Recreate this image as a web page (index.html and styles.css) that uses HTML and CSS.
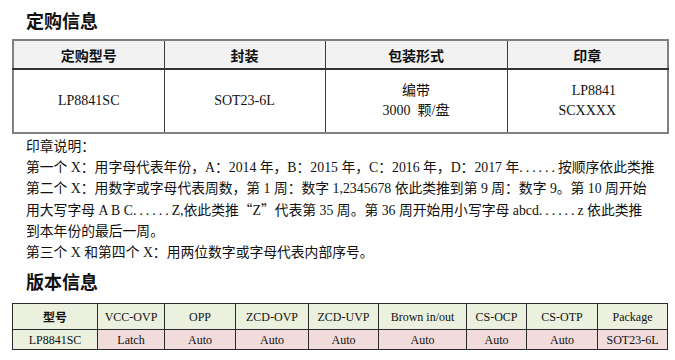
FILE: index.html
```html
<!DOCTYPE html>
<html lang="zh-CN">
<head>
<meta charset="utf-8">
<title>定购信息</title>
<link rel="stylesheet" href="styles.css">
</head>
<body>
<h2 class="title">定购信息</h2>
<table class="order">
  <colgroup>
    <col class="c1"><col class="c2"><col class="c3"><col class="c4">
  </colgroup>
  <thead>
    <tr class="head">
      <th>定购型号</th><th>封装</th><th>包装形式</th><th>印章</th>
    </tr>
  </thead>
  <tbody>
    <tr class="data">
      <td>LP8841SC</td>
      <td>SOT23-6L</td>
      <td>编带<br>3000&nbsp; 颗/盘</td>
      <td><span class="mark">LP8841<br>SCXXXX</span></td>
    </tr>
  </tbody>
</table>
<div class="notes">
  <p>印章说明：</p>
  <p>第一个 X：用字母代表年份，A：2014 年，B：2015 年，C：2016 年，D：2017 年<span class="dots">......</span>按顺序依此类推</p>
  <p>第二个 X：用数字或字母代表周数，第 1 周：数字 1,2345678 依此类推到第 9 周：数字 9。第 10 周开始<br>用大写字母 A B C<span class="dots">......</span>Z,依此类推<span class="q">“</span>Z<span class="q">”</span>代表第 35 周。第 36 周开始用小写字母 abcd<span class="dots">......</span>z 依此类推<br>到本年份的最后一周。</p>
  <p>第三个 X 和第四个 X：用两位数字或字母代表内部序号。</p>
</div>
<h2 class="title title2">版本信息</h2>
<table class="version">
  <colgroup>
    <col class="v1"><col class="v2"><col class="v3"><col class="v4"><col class="v5"><col class="v6"><col class="v7"><col class="v8"><col class="v9">
  </colgroup>
  <tr class="vhead">
    <th class="cjk">型号</th><th>VCC-OVP</th><th>OPP</th><th>ZCD-OVP</th><th>ZCD-UVP</th><th>Brown in/out</th><th>CS-OCP</th><th>CS-OTP</th><th>Package</th>
  </tr>
  <tr class="vdata">
    <td class="model">LP8841SC</td><td>Latch</td><td>Auto</td><td>Auto</td><td>Auto</td><td>Auto</td><td>Auto</td><td>Auto</td><td>SOT23-6L</td>
  </tr>
</table>
</body>
</html>
```

FILE: styles.css
```css
html, body {
  margin: 0;
  padding: 0;
  background: #ffffff;
}
body {
  width: 675px;
  height: 360px;
  overflow: hidden;
  color: #111111;
  font-family: "Liberation Serif", "Noto Sans CJK SC", serif;
}
.title {
  margin: 0;
  padding: 11px 0 0 26px;
  font-family: "Noto Sans CJK SC", sans-serif;
  font-size: 18px;
  line-height: 18px;
  font-weight: 700;
  color: #111111;
}
.title2 {
  padding-top: 9px;
}
table {
  border-collapse: collapse;
  margin-left: 12px;
  table-layout: fixed;
}
.order {
  margin-top: 10px;
  width: 655px;
  border: 2px solid #808080;
}
.order .c1 { width: 151px; }
.order .c2 { width: 161px; }
.order .c3 { width: 182px; }
.order .c4 { width: 161px; }
.order th, .order td {
  border: 1px solid #3a3a3a;
  text-align: center;
  padding: 0;
}
.order .head {
  height: 29px;
  background: #f2f2f2;
}
.order th {
  font-family: "Noto Sans CJK SC", sans-serif;
  font-weight: 700;
  font-size: 14px;
  line-height: 16px;
  border-bottom: 2px solid #333333;
}
.order .data {
  height: 64px;
}
.order td {
  font-size: 14px;
  line-height: 20px;
}
.mark {
  display: inline-block;
  text-align: right;
}
.notes {
  margin-top: 2px;
  padding-left: 26px;
  font-size: 13.8px;
  line-height: 21px;
  color: #111111;
}
.notes p {
  margin: 0;
  white-space: nowrap;
}
.dots {
  letter-spacing: 3px;
}
.q {
  font-family: "Noto Sans CJK SC", sans-serif;
}
.version {
  margin-top: 13px;
  width: 655px;
  border: 1.5px solid #2a2a2a;
}
.version .v1 { width: 85px; }
.version .v2 { width: 67px; }
.version .v3 { width: 71px; }
.version .v4 { width: 73px; }
.version .v5 { width: 70px; }
.version .v6 { width: 88px; }
.version .v7 { width: 60px; }
.version .v8 { width: 71px; }
.version .v9 { width: 70px; }
.version th, .version td {
  border: 1px solid #2a2a2a;
  text-align: center;
  padding: 0;
  font-size: 12px;
  font-weight: 400;
  line-height: 14px;
}
.version .vhead {
  height: 26px;
  background: #ebf1de;
}
.version .vhead .cjk {
  font-family: "Noto Sans CJK SC", sans-serif;
  font-weight: 700;
}
.version .vdata {
  height: 20px;
  background: #f2dcdb;
}
.version .vdata .model {
  background: #ebf1de;
}
```
